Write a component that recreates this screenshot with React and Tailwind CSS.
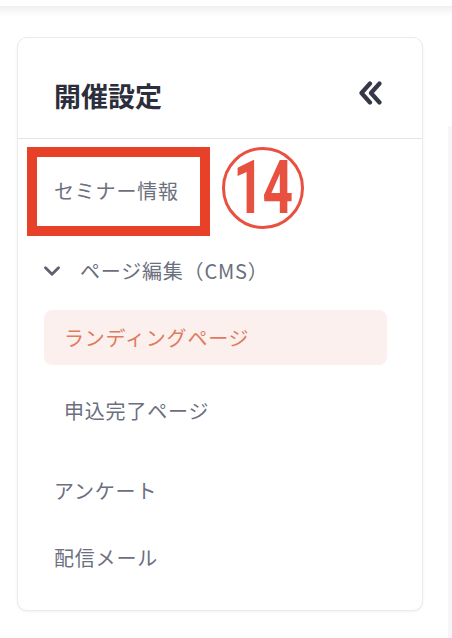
import { ChevronDown } from "lucide-react";

const font = "font-['Noto_Sans_CJK_JP','Noto_Sans',sans-serif]";

function DoubleChevron() {
  return (
    <svg width="26" height="24" viewBox="0 0 26 24" fill="none" className="mt-[-4px]">
      <path d="M12 2.5 3.5 12l8.5 9.5M21.5 2.5 13 12l8.5 9.5" stroke="#363848" strokeWidth="4.2" strokeLinecap="round" strokeLinejoin="round" />
    </svg>
  );
}

export default function App() {
  return (
    <div className={`relative h-[638px] w-[452px] overflow-hidden bg-white ${font}`}>
      {/* header shadow band */}
      <div className="h-[6px] bg-white" />
      <div className="h-[10px] bg-gradient-to-b from-[#f0f0f2] to-white" />

      <div className="flex">
        <div className="pl-[17px] pt-[21px]">
          <div className="h-[574px] w-[406px] rounded-[10px] border border-[#ebebee] bg-white shadow-[0_1px_3px_rgba(0,0,0,0.06)]">
            <div className="flex h-[101px] items-center justify-between border-b border-[#e3e3e8] pl-[36px] pr-[38px] pt-[14px]">
              <h2 className="text-[27px] font-bold leading-none text-[#2c2e3b]">開催設定</h2>
              <DoubleChevron />
            </div>

            <nav className="flex flex-col text-[20px] leading-none tracking-[0.04em] text-[#6b6f7e]">
              <div className="relative mt-[24px] flex h-[56px] items-center pl-[36px]">
                セミナー情報
                <div className="absolute left-[9px] top-[-16px] h-[89px] w-[183px] border-[10px] border-[#e8412a]" />
                <div className="absolute left-[204px] top-[-16px] flex h-[82px] w-[82px] items-center justify-center rounded-full border-[3.5px] border-[#e8503f]">
                  <span className="scale-x-[0.72] font-['Roboto',sans-serif] text-[74px] font-bold leading-none tracking-tight text-[#e8503f]">
                    14
                  </span>
                </div>
              </div>

              <div className="mt-[24px] flex h-[56px] items-center pl-[21px]">
                <ChevronDown size={26} strokeWidth={2.6} className="text-[#5d6170]" />
                <span className="ml-[15px]">ページ編集（CMS）</span>
              </div>

              <div className="ml-[26px] mt-[11px] flex h-[55px] w-[343px] items-center rounded-[8px] bg-[#fbf0ed] pl-[20px] text-[#e07b5f]">
                ランディングページ
              </div>

              <div className="ml-[26px] mt-[18px] flex h-[56px] items-center pl-[20px]">申込完了ページ</div>

              <div className="mt-[24px] flex h-[56px] items-center pl-[36px]">アンケート</div>

              <div className="mt-[11px] flex h-[56px] items-center pl-[36px]">配信メール</div>
            </nav>
          </div>
        </div>
        <div className="ml-[25px] mt-[110px] h-[540px] flex-1 bg-[#f6f6f8]" />
      </div>
    </div>
  );
}
